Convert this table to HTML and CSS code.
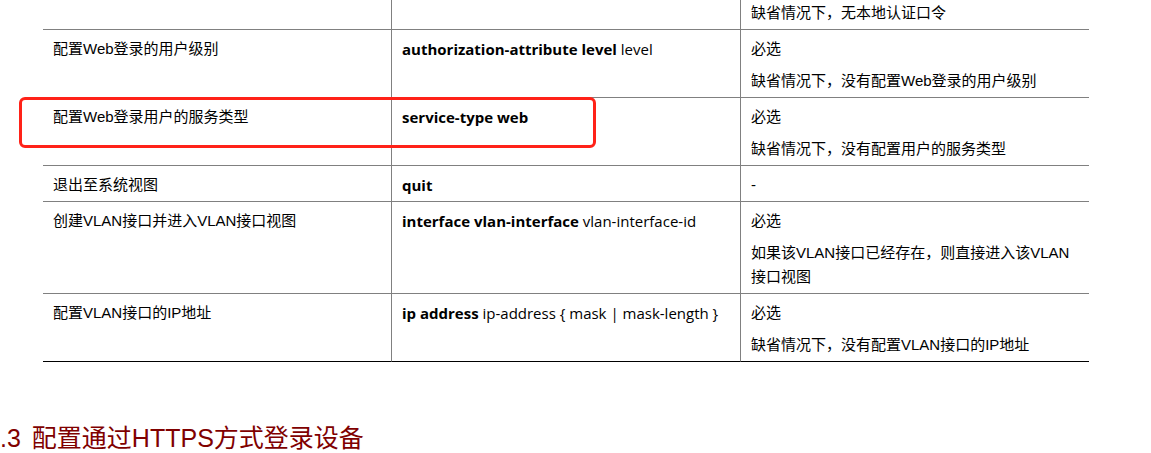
FILE: index.html
```html
<!DOCTYPE html>
<html>
<head>
  <meta charset="utf-8">
  <title>配置通过Web方式登录设备</title>
  <link rel="stylesheet" href="styles.css">
</head>
<body>
  <table class="cmd-table">
    <tr>
      <td class="col-desc"></td>
      <td class="col-cmd"></td>
      <td class="col-note"><p>缺省情况下，无本地认证口令</p></td>
    </tr>
    <tr>
      <td class="col-desc"><p>配置Web登录的用户级别</p></td>
      <td class="col-cmd"><p><b>authorization-attribute level</b> level</p></td>
      <td class="col-note">
        <p>必选</p>
        <p>缺省情况下，没有配置Web登录的用户级别</p>
      </td>
    </tr>
    <tr>
      <td class="col-desc marked">
        <p>配置Web登录用户的服务类型</p>
        <div class="mark-box"></div>
      </td>
      <td class="col-cmd"><p><b>service-type web</b></p></td>
      <td class="col-note">
        <p>必选</p>
        <p>缺省情况下，没有配置用户的服务类型</p>
      </td>
    </tr>
    <tr>
      <td class="col-desc"><p>退出至系统视图</p></td>
      <td class="col-cmd"><p><b>quit</b></p></td>
      <td class="col-note"><p>-</p></td>
    </tr>
    <tr>
      <td class="col-desc"><p>创建VLAN接口并进入VLAN接口视图</p></td>
      <td class="col-cmd"><p><b>interface vlan-interface</b> vlan-interface-id</p></td>
      <td class="col-note">
        <p>必选</p>
        <p>如果该VLAN接口已经存在，则直接进入该VLAN接口视图</p>
      </td>
    </tr>
    <tr class="last-row">
      <td class="col-desc"><p>配置VLAN接口的IP地址</p></td>
      <td class="col-cmd"><p><b>ip address</b> ip-address { mask | mask-length }</p></td>
      <td class="col-note">
        <p>必选</p>
        <p>缺省情况下，没有配置VLAN接口的IP地址</p>
      </td>
    </tr>
  </table>

  <h3 class="section-title"><span class="section-num">.3</span>配置通过HTTPS方式登录设备</h3>
</body>
</html>
```

FILE: styles.css
```css
body {
  margin: 0;
  font-family: "Liberation Sans", "Noto Sans CJK SC", sans-serif;
  font-size: 15px;
  color: #000;
  background-color: #fff;
  overflow: hidden;
}
.cmd-table {
  border-collapse: separate;
  border-spacing: 0;
  margin: -6px 0 0 43px;
  width: 1046px;
  table-layout: fixed;
}
.cmd-table td {
  vertical-align: top;
  padding: 7px 10px 4px 10px;
  border-bottom: 1px solid #808080;
  line-height: 24px;
}
.cmd-table td p {
  margin: 0 0 8px 0;
}
.cmd-table td p:last-child {
  margin-bottom: 0;
}
.col-desc {
  width: 328px;
}
.col-cmd,
.col-note {
  border-left: 1px solid #808080;
}
.col-cmd {
  width: 328px;
  font-family: "Open Sans", "Noto Sans CJK SC", sans-serif;
}
.last-row td {
  border-bottom-color: #000;
}
.marked {
  position: relative;
}
.mark-box {
  position: absolute;
  left: -24px;
  top: -1px;
  width: 577px;
  height: 51px;
  box-sizing: border-box;
  border: 3px solid #ff2218;
  border-radius: 6px;
}
.section-title {
  margin: 56px 0 0 0;
  font-weight: normal;
  font-size: 25px;
  color: #800000;
  font-family: "Liberation Sans", "Noto Sans CJK SC", sans-serif;
}
.section-num {
  margin-right: 11px;
}
```
